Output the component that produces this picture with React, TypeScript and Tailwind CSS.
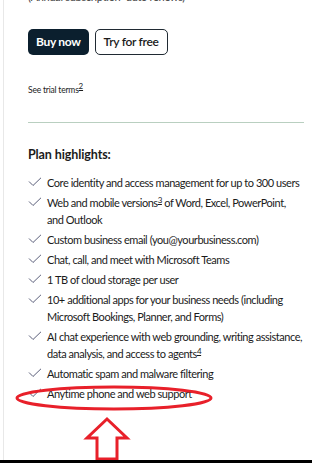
import { ReactNode } from "react";

function Check() {
  return (
    <svg width="14" height="10" viewBox="0 0 14 10" className="shrink-0 mt-[3px]">
      <path d="M1 4.5 L5 8.5 L13 0.8" fill="none" stroke="#5b5f7a" strokeWidth="1" />
    </svg>
  );
}

function Item({ children }: { children: ReactNode }) {
  return (
    <li className="flex gap-[5px] leading-[17px]">
      <Check />
      <span>{children}</span>
    </li>
  );
}

function Sup({ n }: { n: string }) {
  return <span className="align-[4px] text-[8px] leading-[0] underline text-[#1b1b1b]">{n}</span>;
}

export default function App() {
  return (
    <div
      className="relative w-[312px] h-[463px] overflow-hidden bg-white text-[#1b1b1b]"
      style={{ fontFamily: 'Lato, "Open Sans", sans-serif' }}
    >
      <div className="absolute left-[3px] top-0 bottom-0 w-px bg-[#e8e8e8]" />
      <div className="pl-[28px] pr-[8px]">
        <p className="-mt-[11px] text-[11px] tracking-[-0.3px] text-[#444] leading-[16px]">(Annual subscription–auto renews)</p>
        <div className="mt-[24px] flex gap-[6px]">
          <button className="h-[26px] px-[8px] rounded-[5px] bg-[#0b1f2e] text-white text-[12px] tracking-[-0.3px] font-bold">
            Buy now
          </button>
          <button className="h-[26px] px-[8px] rounded-[5px] border border-[#202a33] bg-white text-[12px] tracking-[-0.3px] font-semibold">
            Try for free
          </button>
        </div>
        <p className="mt-[29px] text-[8.5px] leading-[12px] tracking-[-0.2px]">
          See trial terms<Sup n="2" />
        </p>
        <div className="mt-[26px] h-px bg-[#b9cfc0]" />
        <h3 className="mt-[23px] text-[12.5px] font-bold leading-[18px] tracking-[-0.1px]">Plan highlights:</h3>
        <ul className="mt-[10px] flex flex-col gap-[3px] text-[11px] tracking-[-0.45px]">
          <Item>Core identity and access management for up to 300 users</Item>
          <Item>
            Web and mobile versions<Sup n="3" /> of Word, Excel, PowerPoint, and Outlook
          </Item>
          <Item>Custom business email (you@yourbusiness.com)</Item>
          <Item>Chat, call, and meet with Microsoft Teams</Item>
          <Item>1 TB of cloud storage per user</Item>
          <Item>10+ additional apps for your business needs (including Microsoft Bookings, Planner, and Forms)</Item>
          <Item>
            AI chat experience with web grounding, writing assistance, data analysis, and access to agents
            <Sup n="4" />
          </Item>
          <Item>Automatic spam and malware filtering</Item>
          <Item>Anytime phone and web support</Item>
        </ul>
      </div>
      <svg className="absolute left-0 top-0 pointer-events-none" width="312" height="463">
        <ellipse cx="114" cy="398" rx="97" ry="11" fill="none" stroke="#e8202a" strokeWidth="3" />
        <path
          d="M107 419 L127 438 L117 438 L117 459 L97 459 L97 438 L87 438 Z"
          fill="none"
          stroke="#e8202a"
          strokeWidth="3"
          strokeLinejoin="miter"
        />
      </svg>
      <div className="absolute left-0 right-0 bottom-0 h-[3px] bg-black" />
    </div>
  );
}
